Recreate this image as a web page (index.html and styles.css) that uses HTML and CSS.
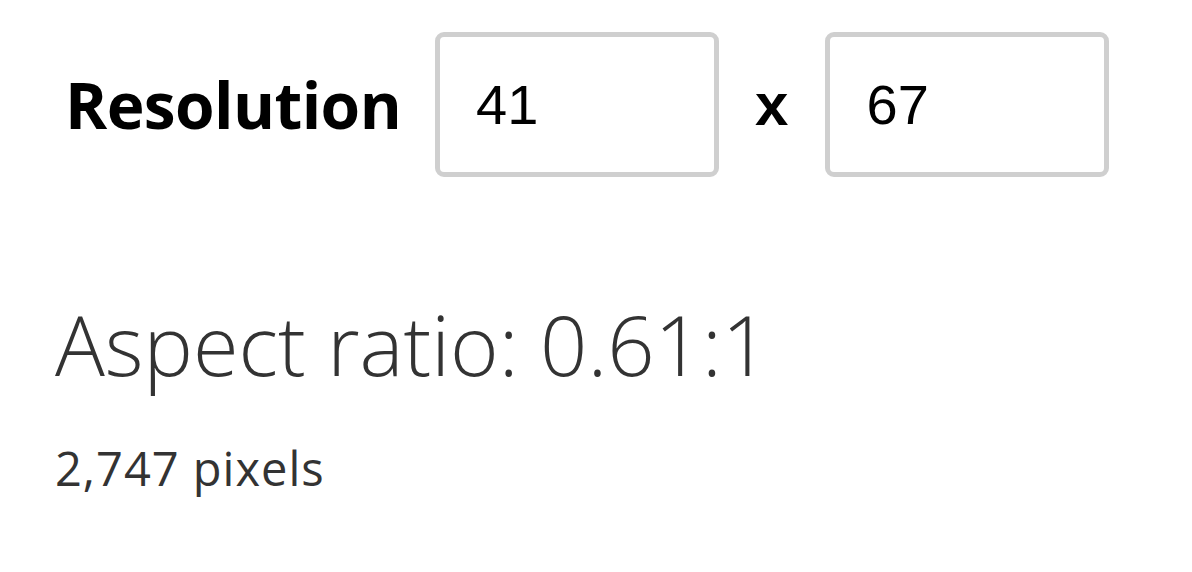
FILE: index.html
```html
<!DOCTYPE html>
<html>
<head>
<meta charset="utf-8">
<link rel="stylesheet" href="styles.css">
</head>
<body>
<div class="page">
  <div class="res-row">
    <label class="res-label">Resolution</label>
    <input class="res-input" type="text" value="41">
    <span class="times">x</span>
    <input class="res-input" type="text" value="67">
  </div>
  <div class="aspect">Aspect ratio: 0.61:1</div>
  <div class="pixels">2,747 pixels</div>
</div>
</body>
</html>
```
FILE: styles.css
```css
html, body {
  margin: 0;
  padding: 0;
  background: #fff;
}
.page {
  padding: 32px 0 0 55px;
  font-family: "Open Sans", "Noto Sans", sans-serif;
}
.res-row {
  display: flex;
  align-items: center;
}
.res-label {
  font-family: "Open Sans", sans-serif;
  font-weight: 700;
  font-size: 64px;
  color: #000;
  margin-left: 10px;
  margin-right: 34px;
  letter-spacing: -0.6px;
}
.res-input {
  box-sizing: border-box;
  width: 284px;
  height: 145px;
  border: 5px solid #cfcfcf;
  border-radius: 9px;
  padding: 0 0 0 36px;
  font-family: "Liberation Sans", Arial, sans-serif;
  font-size: 56px;
  color: #000;
  background: #fff;
  outline: none;
}
.times {
  font-family: "Liberation Sans", Arial, sans-serif;
  font-weight: 700;
  font-size: 60px;
  color: #000;
  margin: 0 37px 0 36px;
}
.aspect {
  margin-top: 117px;
  font-size: 83px;
  font-weight: 300;
  color: #333;
  line-height: 100px;
}
.pixels {
  margin-top: 44px;
  font-size: 47px;
  font-weight: 400;
  letter-spacing: 1px;
  color: #333;
  line-height: 60px;
}
```
